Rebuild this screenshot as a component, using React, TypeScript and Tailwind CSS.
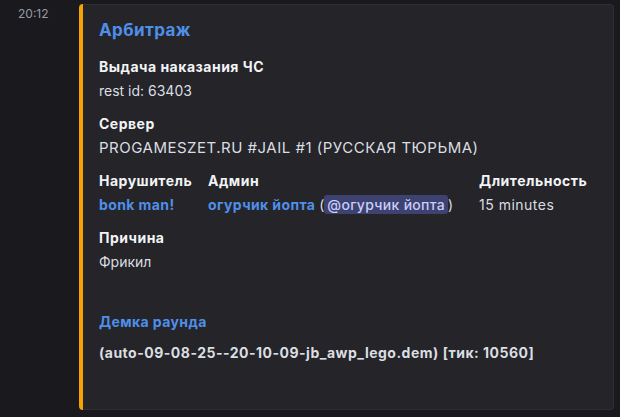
const font = { fontFamily: 'Inter, "Noto Sans", sans-serif' };

function Field({ name, children, className = '' }: { name: string; children: React.ReactNode; className?: string }) {
  return (
    <div className={className}>
      <div className="text-[14px] font-bold leading-[22px] tracking-[0.5px] text-[#f2f3f5]">{name}</div>
      <div className="mt-[2px] text-[14px] leading-[22px] text-[#dbdee1]">{children}</div>
    </div>
  );
}

export default function App() {
  return (
    <div className="flex h-[417px] w-[620px] bg-[#1a1a1e]" style={font}>
      <div className="w-[79px] shrink-0 pl-[18px] pt-[5px] text-[12px] leading-[18px] text-[#949ba4]">20:12</div>
      <div className="mt-[4px] h-[406px] w-[535px] rounded-[4px] border border-l-0 border-[#2e2f34] bg-[#242429]">
        <div className="flex h-full">
          <div className="-my-px w-[4px] shrink-0 rounded-l-[4px] bg-[#f5a300]" />
          <div className="flex-1 pl-[16px] pt-[14px]">
            <div className="text-[17px] font-bold leading-[22px] tracking-[0.4px] text-[#4f8fe8]">Арбитраж</div>
            <div className="mt-[15px] flex flex-col gap-[11px]">
              <Field name="Выдача наказания ЧС">rest id: 63403</Field>
              <Field name="Сервер">
                <span className="text-[15px] tracking-[0.5px]">PROGAMESZET.RU #JAIL #1 (РУССКАЯ ТЮРЬМА)</span>
              </Field>
              <div className="flex">
                <Field name="Нарушитель" className="w-[109px]">
                  <span className="font-bold tracking-[0.4px] text-[#4f8fe8]">bonk man!</span>
                </Field>
                <Field name="Админ" className="w-[271px]">
                  <span className="font-bold tracking-[0.4px] text-[#4f8fe8]">огурчик йопта</span>{' '}
                  (<span className="rounded-[3px] bg-[#3d4270] px-[3px] py-[1px] font-medium tracking-[0.3px] text-[#c9cdfb]">@огурчик йопта</span>)
                </Field>
                <Field name="Длительность">
                  <span className="tracking-[0.5px]">15 minutes</span>
                </Field>
              </div>
              <Field name="Причина">Фрикил</Field>
            </div>
            <div className="mt-[38px] text-[14px] font-bold leading-[22px] tracking-[0.4px] text-[#4f8fe8]">Демка раунда</div>
            <div className="mt-[9px] text-[14px] font-bold leading-[22px] tracking-[0.5px] text-[#dbdee1]">
              (auto-09-08-25--20-10-09-jb_awp_lego.dem) [тик: 10560]
            </div>
          </div>
        </div>
      </div>
    </div>
  );
}
